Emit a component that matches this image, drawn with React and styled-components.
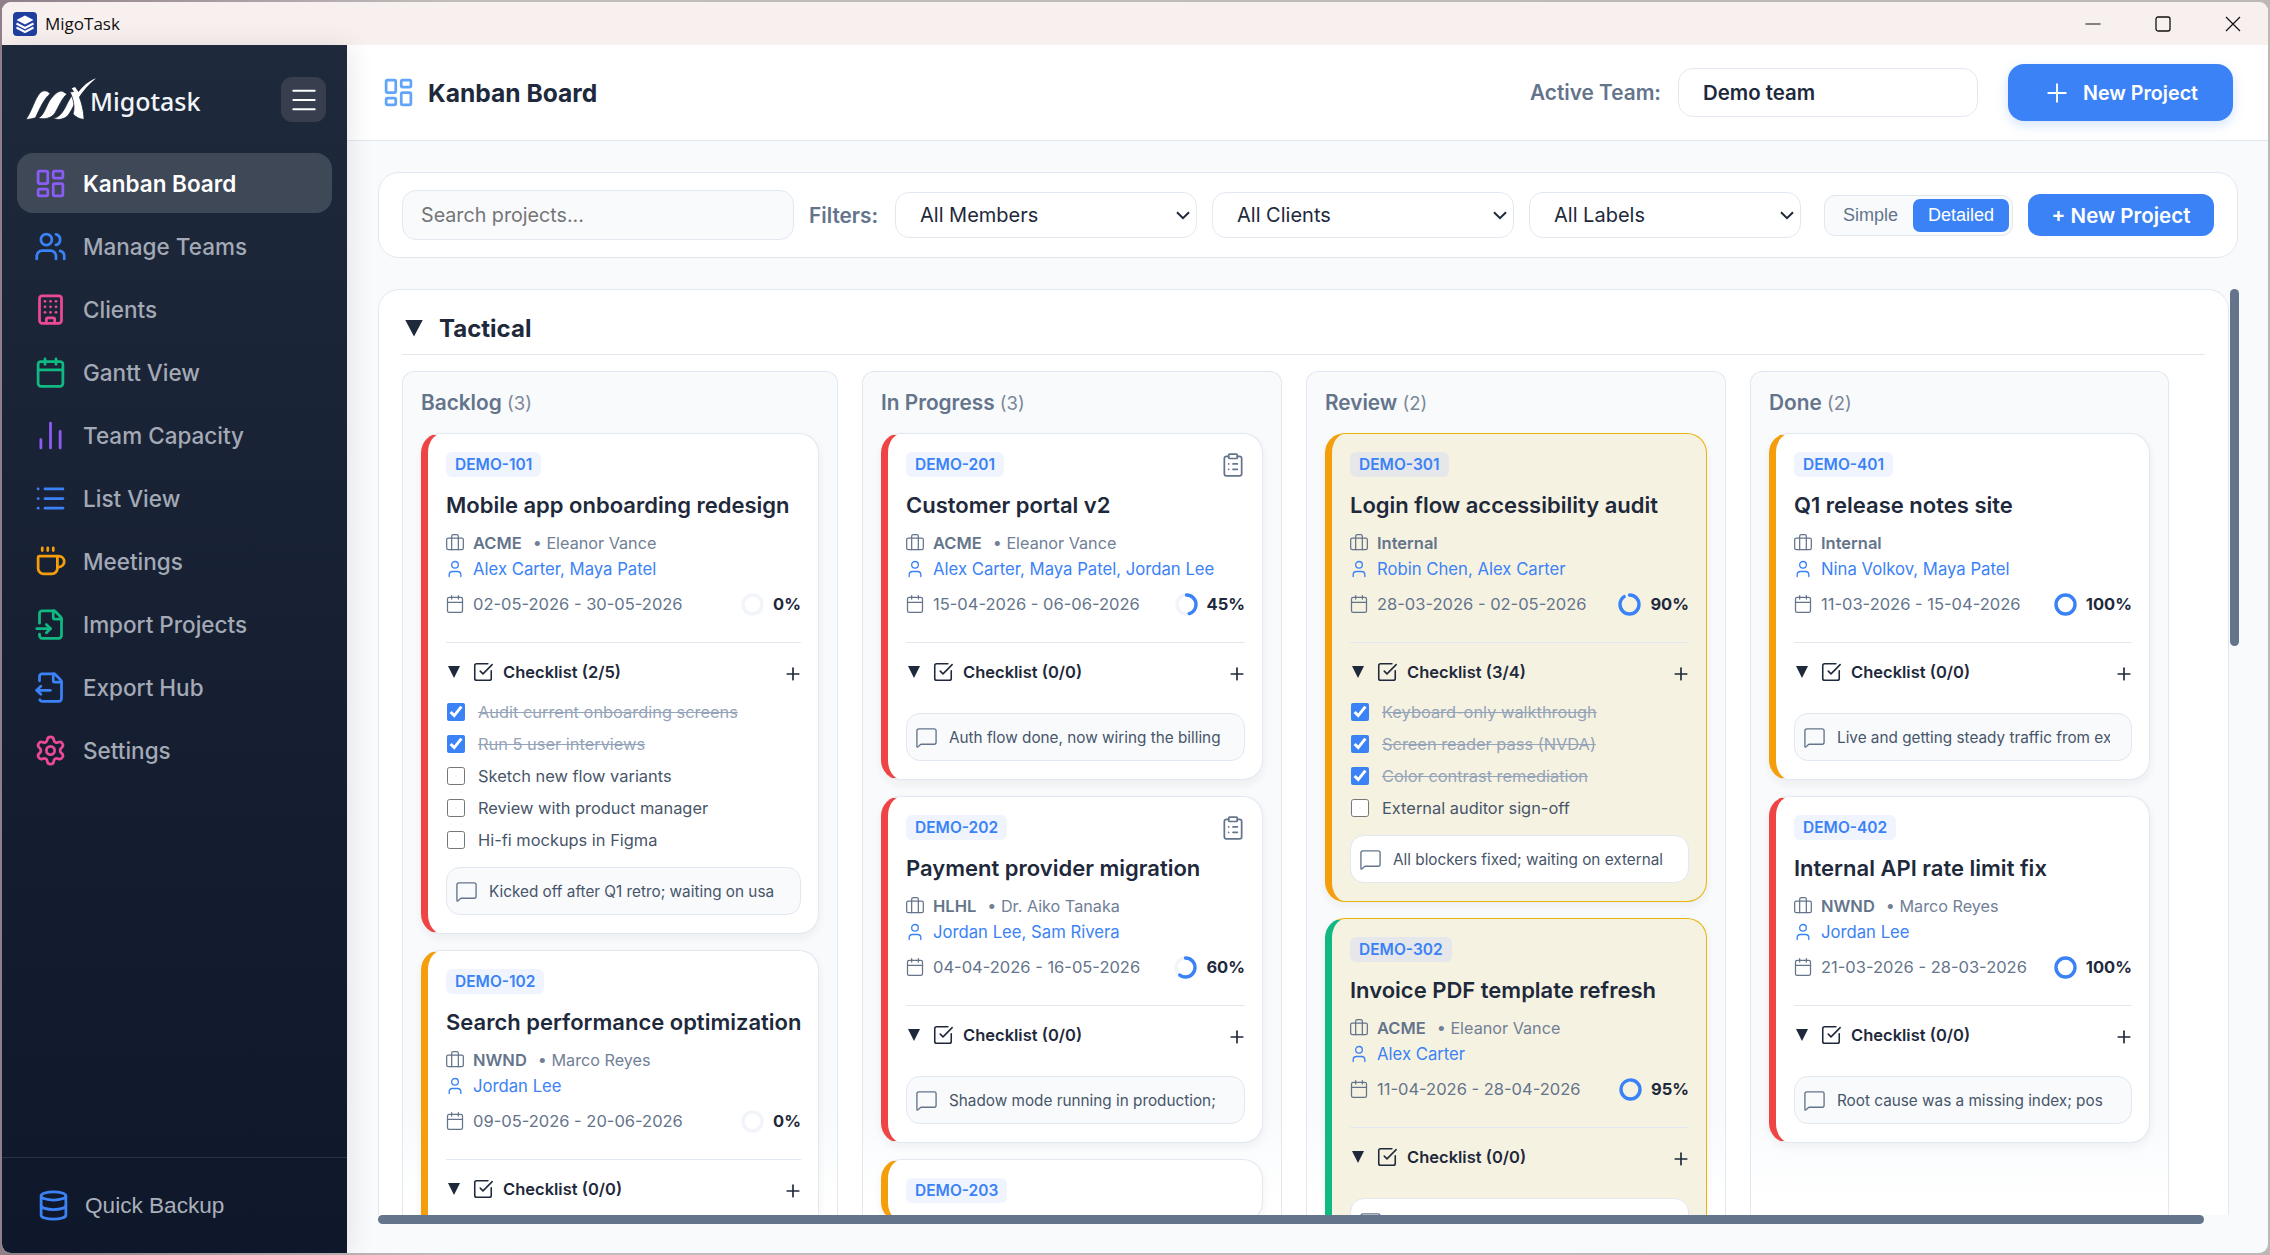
import React from 'react';
import styled, { createGlobalStyle } from 'styled-components';
import {
  LayoutDashboard, Users, Building, Calendar, ChartNoAxesColumn, List, Coffee, FileInput,
  FileOutput, Settings, Database, Menu, Plus, Briefcase, User, SquareCheckBig, MessageSquare, ClipboardList,
} from 'lucide-react';

const GlobalStyle = createGlobalStyle`
  * { box-sizing: border-box; }
  html, body { margin: 0; height: 100%; }
  body {
    background: linear-gradient(90deg, #8f7f88, #c2bdbd 20%, #bdb8b8);
    font-family: Inter, "Liberation Sans", sans-serif;
    overflow: hidden;
  }
`;

const chevron = `url("data:image/svg+xml,%3Csvg xmlns='http://www.w3.org/2000/svg' width='14' height='9' viewBox='0 0 14 9'%3E%3Cpath d='M1 1.2l6 6 6-6' fill='none' stroke='%231e293b' stroke-width='2'/%3E%3C/svg%3E")`;

//STYLED COMPONENTS
const Win = styled.div`
  width: 2266px;
  height: 1251px;
  margin: 2px;
  border-radius: 9px;
  overflow: hidden;
  display: flex;
  flex-direction: column;
  background: #f8fafc;
`;

const TitleBar = styled.div`
  height: 43px;
  flex: none;
  background: #f8f0ee;
  display: flex;
  align-items: center;
  padding-left: 11px;
`;

const WinName = styled.span`
  font-family: "Open Sans", sans-serif;
  font-size: 17px;
  color: #111;
  margin-left: 8px;
  flex: 1;
`;

const WinBtn = styled.div`
  width: 70px;
  height: 43px;
  display: flex;
  align-items: center;
  justify-content: center;
`;

const Body = styled.div`
  flex: 1;
  min-height: 0;
  display: flex;
`;

const Sidebar = styled.aside`
  width: 345px;
  flex: none;
  background: linear-gradient(180deg, #1e293b, #0f172a);
  box-shadow: 4px 0 24px rgba(0, 0, 0, 0.09);
  display: flex;
  flex-direction: column;
  position: relative;
  z-index: 2;
`;

const SideTop = styled.div`
  display: flex;
  align-items: center;
  justify-content: space-between;
  padding: 32px 21px 0 24px;
`;

const Logo = styled.div`
  display: flex;
  align-items: center;
`;

const LogoText = styled.span`
  font-family: "Noto Sans", sans-serif;
  font-size: 25px;
  font-weight: 500;
  color: #f1f5f9;
  margin-left: -8px;
  margin-top: 2px;
`;

const Burger = styled.div`
  width: 45px;
  height: 45px;
  border-radius: 11px;
  background: #373f4e;
  color: #fff;
  display: flex;
  align-items: center;
  justify-content: center;
`;

const Nav = styled.nav`
  flex: 1;
  padding: 31px 15px 0;
  display: flex;
  flex-direction: column;
  gap: 3px;
`;

const NavItem = styled.div`
  height: 60px;
  border-radius: 16px;
  display: flex;
  align-items: center;
  gap: 16px;
  padding-left: 17px;
  font-size: 22.5px;
  font-weight: ${p => (p.$active ? 600 : 500)};
  color: ${p => (p.$active ? '#fff' : '#a3a9b5')};
  background: ${p => (p.$active ? '#3f4857' : 'transparent')};
  svg { color: ${p => p.$color}; flex: none; }
`;

const SideFoot = styled.div`
  height: 96px;
  flex: none;
  border-top: 1px solid #2a3345;
  display: flex;
  align-items: center;
  gap: 15px;
  padding-left: 35px;
  font-family: "Liberation Sans", sans-serif;
  font-size: 22.6px;
  color: #aab0ba;
  svg { color: #3b82f6; flex: none; }
`;

const Main = styled.main`
  flex: 1;
  min-width: 0;
  display: flex;
  flex-direction: column;
`;

const Header = styled.header`
  height: 96px;
  flex: none;
  background: #fff;
  border-bottom: 1px solid #e2e8f0;
  display: flex;
  align-items: center;
  padding: 0 35px;
`;

const PageTitle = styled.h1`
  margin: 0 0 0 13px;
  flex: 1;
  font-size: 24.6px;
  font-weight: 700;
  color: #1e293b;
`;

const TeamLabel = styled.span`
  font-size: 20.8px;
  font-weight: 600;
  color: #64748b;
  margin-right: 17px;
`;

const TeamSelect = styled.select`
  appearance: none;
  width: 300px;
  height: 49px;
  border: 1px solid #e2e8f0;
  border-radius: 15px;
  background: #fff;
  padding-left: 24px;
  margin-right: 30px;
  font-family: inherit;
  font-size: 20.4px;
  font-weight: 600;
  color: #1e293b;
`;

const BigButton = styled.button`
  width: 225px;
  height: 57px;
  border: 0;
  border-radius: 16px;
  background: #3b82f6;
  color: #fff;
  display: flex;
  align-items: center;
  gap: 11px;
  padding-left: 34px;
  font-family: inherit;
  font-size: 19.7px;
  font-weight: 600;
  box-shadow: 0 4px 12px rgba(59, 130, 246, 0.22);
`;

const Content = styled.div`
  flex: 1;
  min-height: 0;
  display: flex;
  flex-direction: column;
  padding: 31px 30px 29px 31px;
`;

const Toolbar = styled.div`
  height: 86px;
  flex: none;
  background: #fff;
  border: 1px solid #e2e8f0;
  border-radius: 21px;
  display: flex;
  align-items: center;
  gap: 15px;
  padding: 0 23px;
`;

const Search = styled.input`
  width: 392px;
  height: 50px;
  background: #f8fafc;
  border: 1px solid #e2e8f0;
  border-radius: 14px;
  padding-left: 18px;
  font-family: inherit;
  font-size: 19.7px;
  &::placeholder { color: #757575; }
`;

const FilterLabel = styled.span`
  width: 71px;
  font-size: 20.8px;
  font-weight: 600;
  color: #64748b;
  white-space: nowrap;
`;

const FilterSelect = styled.select`
  appearance: none;
  width: ${p => p.$w}px;
  height: 46px;
  border: 1px solid #e2e8f0;
  border-radius: 14px;
  background: #fff ${chevron} no-repeat right 6px center;
  padding-left: 24px;
  font-family: inherit;
  font-size: 20px;
  color: #1e293b;
`;

const Toggle = styled.div`
  width: 189px;
  height: 41px;
  margin-left: 8px;
  background: #f8fafc;
  border: 1px solid #e2e8f0;
  border-radius: 11px;
  padding: 3px;
  display: flex;
`;

const ToggleBtn = styled.button`
  width: ${p => (p.$active ? 96 : 85)}px;
  border: 0;
  border-radius: 7px;
  background: ${p => (p.$active ? '#3b82f6' : 'transparent')};
  color: ${p => (p.$active ? '#fff' : '#64748b')};
  font-family: "Liberation Sans", sans-serif;
  font-size: 18px;
  padding: 0;
`;

const SmallButton = styled.button`
  width: 186px;
  height: 42px;
  border: 0;
  border-radius: 12px;
  background: #3b82f6;
  color: #fff;
  font-family: inherit;
  font-size: 20.5px;
  font-weight: 600;
  padding: 0;
`;

const BoardRow = styled.div`
  flex: 1;
  min-height: 0;
  margin-top: 31px;
  margin-right: -1px;
  display: flex;
`;

const Section = styled.section`
  flex: 1;
  min-width: 0;
  background: #fff;
  border: 1px solid #e2e8f0;
  border-bottom: 0;
  border-radius: 21px 21px 0 0;
  padding: 0 23px;
  overflow: hidden;
`;

const SectionHead = styled.div`
  height: 65px;
  border-bottom: 1px solid #e2e8f0;
  display: flex;
  align-items: center;
  gap: 16px;
  padding: 12px 3px 0;
  font-size: 24px;
  font-weight: 700;
  color: #1e293b;
`;

const Caret = styled.span`
  display: block;
  width: ${p => p.$size}px;
  height: ${p => p.$h}px;
  flex: none;
  background: #1e293b;
  clip-path: polygon(0 0, 100% 0, 50% 100%);
`;

const Columns = styled.div`
  display: flex;
  gap: 24px;
  margin-top: 16px;
  align-items: stretch;
`;

const Column = styled.div`
  width: ${p => p.$w}px;
  flex: none;
  border: 1px solid #e2e8f0;
  border-bottom: 0;
  border-radius: 12px 12px 0 0;
  background: linear-gradient(#f8fafc 740px, #fff 830px);
  padding: 0 18px;
  min-height: 900px;
`;

const ColHead = styled.div`
  height: 61px;
  padding-top: 18px;
  line-height: 26px;
  font-size: 20.8px;
  font-weight: 600;
  color: #64748b;
`;

const ColCount = styled.span`
  font-size: 18.5px;
  font-weight: 400;
  color: #7b8798;
`;

const CardStack = styled.div`
  display: flex;
  flex-direction: column;
  gap: 16px;
`;

const Card = styled.article`
  background: ${p => (p.$warn ? '#f6f2e2' : '#fff')};
  border: 1px solid ${p => (p.$warn ? '#eab308' : '#e2e8f0')};
  border-left: 7px solid ${p => p.$stripe};
  border-radius: 20px;
  padding: 18px 17px 18px 18px;
  box-shadow: 0 4px 10px rgba(30, 41, 59, 0.06);
`;

const CardTop = styled.div`
  height: 25px;
  display: flex;
  align-items: center;
  justify-content: space-between;
  svg { color: #64748b; margin-right: -1px; }
`;

const Badge = styled.span`
  height: 25px;
  line-height: 25px;
  padding: 0 9px;
  border-radius: 6px;
  background: ${p => (p.$warn ? '#e5e7eb' : '#eff4fe')};
  color: #3b82f6;
  font-size: 15.5px;
  font-weight: 600;
`;

const CardTitle = styled.h3`
  margin: 12px 0 9px;
  height: 32px;
  line-height: 32px;
  font-size: 22px;
  font-weight: 600;
  color: #1e293b;
  white-space: nowrap;
`;

const MetaRow = styled.div`
  height: 26px;
  display: flex;
  align-items: center;
  gap: 8px;
  font-size: ${p => p.$size || 16.5}px;
  color: ${p => p.$color || '#64748b'};
  svg { margin-left: -1px; flex: none; }
`;

const ClientCode = styled.span`
  font-weight: 600;
`;

const Owner = styled.span`
  margin-left: 3px;
  font-size: 16.2px;
  color: #718096;
`;

const DateRow = styled(MetaRow)`
  margin-top: 9px;
`;

const DateText = styled.span`
  flex: 1;
`;

const Percent = styled.span`
  margin-left: 1px;
  font-weight: 700;
  color: #1e293b;
`;

const Rule = styled.div`
  height: 1px;
  margin-top: 25px;
  background: #e2e8f0;
`;

const CheckHead = styled.div`
  height: 26px;
  margin-top: 16px;
  display: flex;
  align-items: center;
  font-size: 16.5px;
  font-weight: 600;
  color: #1e293b;
`;

const CheckCaret = styled.div`
  width: 26px;
  padding-left: 2px;
`;

const CheckTitle = styled.span`
  flex: 1;
  margin-left: 9px;
`;

const AddItem = styled.div`
  margin: 4px -2px 0 0;
  display: flex;
`;

const Items = styled.div`
  margin-top: 11px;
  min-height: 6px;
`;

const Item = styled.label`
  height: 32px;
  display: flex;
  align-items: center;
  gap: 13px;
  font-size: 16.4px;
  color: ${p => (p.$done ? '#94a3b8' : '#475569')};
  text-decoration: ${p => (p.$done ? 'line-through' : 'none')};
`;

const Check = styled.input`
  width: 18px;
  height: 18px;
  margin: 0 0 0 1px;
  accent-color: #3b82f6;
`;

const Note = styled.div`
  height: 48px;
  margin-top: 11px;
  border: 1px solid #e2e8f0;
  border-radius: 14px;
  background: ${p => (p.$warn ? '#fff' : '#f8fafc')};
  display: flex;
  align-items: center;
  gap: 11px;
  padding: 0 21px 0 8px;
  font-size: 15.3px;
  color: #475569;
  svg { flex: none; color: #64748b; }
`;

const NoteText = styled.span`
  overflow: hidden;
  white-space: nowrap;
`;

const VTrack = styled.div`
  width: 10px;
  flex: none;
  padding-left: 1px;
`;

const VThumb = styled.div`
  height: 357px;
  border-radius: 5px;
  background: #64748b;
`;

const HThumb = styled.div`
  width: 1826px;
  height: 9px;
  flex: none;
  border-radius: 5px;
  background: #64748b;
`;
//END of styled components

const navItems = [
  ['Kanban Board', LayoutDashboard, '#8b5cf6'],
  ['Manage Teams', Users, '#3b82f6'],
  ['Clients', Building, '#ec4899'],
  ['Gantt View', Calendar, '#10b981'],
  ['Team Capacity', ChartNoAxesColumn, '#8b5cf6'],
  ['List View', List, '#3b82f6'],
  ['Meetings', Coffee, '#f59e0b'],
  ['Import Projects', FileInput, '#10b981'],
  ['Export Hub', FileOutput, '#3b82f6'],
  ['Settings', Settings, '#ec4899'],
];

const RED = '#ef4444';
const AMBER = '#f59e0b';
const GREEN = '#10b981';

const board = [
  {
    name: 'Backlog', count: 3, width: 436,
    cards: [
      {
        id: 'DEMO-101', stripe: RED, title: 'Mobile app onboarding redesign', client: 'ACME', owner: 'Eleanor Vance',
        people: 'Alex Carter, Maya Patel', dates: '02-05-2026 - 30-05-2026', pct: 0,
        done: 2,
        items: ['Audit current onboarding screens', 'Run 5 user interviews', 'Sketch new flow variants', 'Review with product manager', 'Hi-fi mockups in Figma'],
        note: 'Kicked off after Q1 retro; waiting on usa',
      },
      {
        id: 'DEMO-102', stripe: AMBER, title: 'Search performance optimization', client: 'NWND', owner: 'Marco Reyes',
        people: 'Jordan Lee', dates: '09-05-2026 - 20-06-2026', pct: 0, note: '',
      },
    ],
  },
  {
    name: 'In Progress', count: 3, width: 420,
    cards: [
      {
        id: 'DEMO-201', stripe: RED, clip: true, title: 'Customer portal v2', client: 'ACME', owner: 'Eleanor Vance',
        people: 'Alex Carter, Maya Patel, Jordan Lee', dates: '15-04-2026 - 06-06-2026', pct: 45,
        note: 'Auth flow done, now wiring the billing',
      },
      {
        id: 'DEMO-202', stripe: RED, clip: true, title: 'Payment provider migration', client: 'HLHL', owner: 'Dr. Aiko Tanaka',
        people: 'Jordan Lee, Sam Rivera', dates: '04-04-2026 - 16-05-2026', pct: 60,
        note: 'Shadow mode running in production;',
      },
      { id: 'DEMO-203', stripe: AMBER, short: true },
    ],
  },
  {
    name: 'Review', count: 2, width: 420,
    cards: [
      {
        id: 'DEMO-301', stripe: AMBER, warn: true, title: 'Login flow accessibility audit', client: 'Internal',
        people: 'Robin Chen, Alex Carter', dates: '28-03-2026 - 02-05-2026', pct: 90,
        done: 3,
        items: ['Keyboard-only walkthrough', 'Screen reader pass (NVDA)', 'Color contrast remediation', 'External auditor sign-off'],
        note: 'All blockers fixed; waiting on external',
      },
      {
        id: 'DEMO-302', stripe: GREEN, warn: true, title: 'Invoice PDF template refresh', client: 'ACME', owner: 'Eleanor Vance',
        people: 'Alex Carter', dates: '11-04-2026 - 28-04-2026', pct: 95, note: '',
      },
    ],
  },
  {
    name: 'Done', count: 2, width: 419,
    cards: [
      {
        id: 'DEMO-401', stripe: AMBER, title: 'Q1 release notes site', client: 'Internal',
        people: 'Nina Volkov, Maya Patel', dates: '11-03-2026 - 15-04-2026', pct: 100,
        note: 'Live and getting steady traffic from ex',
      },
      {
        id: 'DEMO-402', stripe: RED, title: 'Internal API rate limit fix', client: 'NWND', owner: 'Marco Reyes',
        people: 'Jordan Lee', dates: '21-03-2026 - 28-03-2026', pct: 100,
        note: 'Root cause was a missing index; pos',
      },
    ],
  },
];

const AppIcon = () => (
  <svg width="24" height="24" viewBox="0 0 24 24">
    <rect width="24" height="24" rx="4" fill="#1e3f9e" />
    <path d="M12 3.5 20.5 8 12 12.5 3.5 8Z" fill="#fff" />
    <path d="M3.5 11.5 12 16l8.5-4.5M3.5 15.5 12 20l8.5-4.5" fill="none" stroke="#fff" strokeWidth="2" />
  </svg>
);

const LogoMark = () => (
  <svg width="72" height="44" viewBox="0 0 72 44">
    <g fill="#fff" stroke="#1e293b" strokeWidth="0.8">
      <path d="M0 41.3C6 33 9 20 14 15 17 12 21 12 24 15.7 18 21 14 30 9.500 39.700 6 41 3 41.300 0 41.300Z" />
      <path d="M12 40C18 38 20 28 24 22 27 18 31 13 36 13L41 16C36 20 33 28 29 35 26 40 18 42 12 40Z" />
      <path d="M27 40C33 40 37 34 40 28 43 22 46 16 51 13L54 16C50 22 47 30 43 36 40 41 32 43 27 40Z" />
      <path d="M44 14 51 13C55 22 58 33 58 41.500 53 41 50 39 47 36 49 30 48 22 44 14Z" />
    </g>
    <path d="M45.700 10.300 49 9 52.500 14C57 8 63 3 70 .3 63 6 57 13 52.300 20Z" fill="#fff" />
  </svg>
);

const Ring = ({ pct }) => {
  const r = 9.5;
  const c = 2 * Math.PI * r;
  return (
    <svg width="23" height="23" viewBox="0 0 23 23">
      <circle cx="11.5" cy="11.5" r={r} fill="none" stroke="#f1f5f9" strokeWidth="3.4" />
      {pct > 0 && (
        <circle
          cx="11.5" cy="11.5" r={r} fill="none" stroke="#3b82f6" strokeWidth="3.4" strokeLinecap="round"
          strokeDasharray={`${(c * pct) / 100} ${c}`} transform="rotate(-90 11.5 11.5)"
        />
      )}
    </svg>
  );
};

const ProjectCard = ({ card }) => {
  const items = card.items || [];
  const done = card.done || 0;
  if (card.short) {
    return (
      <Card $stripe={card.stripe}>
        <CardTop><Badge>{card.id}</Badge></CardTop>
      </Card>
    );
  }
  return (
    <Card $stripe={card.stripe} $warn={card.warn}>
      <CardTop>
        <Badge $warn={card.warn}>{card.id}</Badge>
        {card.clip && <ClipboardList size={26} strokeWidth={1.6} />}
      </CardTop>
      <CardTitle>{card.title}</CardTitle>
      <MetaRow>
        <Briefcase size={20} strokeWidth={1.5} />
        <ClientCode>{card.client}</ClientCode>
        {card.owner && <Owner>• {card.owner}</Owner>}
      </MetaRow>
      <MetaRow $color="#3b82f6" $size={16.7}>
        <User size={20} strokeWidth={1.6} />
        {card.people}
      </MetaRow>
      <DateRow>
        <Calendar size={20} strokeWidth={1.5} />
        <DateText>{card.dates}</DateText>
        <Ring pct={card.pct} />
        <Percent>{card.pct}%</Percent>
      </DateRow>
      <Rule />
      <CheckHead>
        <CheckCaret><Caret $size={12} $h={12} /></CheckCaret>
        <SquareCheckBig size={22} strokeWidth={1.7} />
        <CheckTitle>Checklist ({done}/{items.length})</CheckTitle>
        <AddItem><Plus size={20} strokeWidth={2} /></AddItem>
      </CheckHead>
      <Items>
        {items.map((text, i) => (
          <Item key={text} $done={i < done}>
            <Check type="checkbox" defaultChecked={i < done} />
            {text}
          </Item>
        ))}
      </Items>
      <Note $warn={card.warn}>
        <MessageSquare size={23} strokeWidth={1.4} />
        <NoteText>{card.note}</NoteText>
      </Note>
    </Card>
  );
};

const App = () => {
  return (
    <>
      <GlobalStyle />
      <Win>
        <TitleBar>
          <AppIcon />
          <WinName>MigoTask</WinName>
          <WinBtn>
            <svg width="16" height="16" viewBox="0 0 16 16"><path d="M0.5 8h15" stroke="#111" strokeWidth="1.2" /></svg>
          </WinBtn>
          <WinBtn>
            <svg width="16" height="16" viewBox="0 0 16 16"><rect x="1" y="1" width="14" height="14" rx="2" fill="none" stroke="#111" strokeWidth="1.3" /></svg>
          </WinBtn>
          <WinBtn>
            <svg width="16" height="16" viewBox="0 0 16 16"><path d="M1 1l14 14M15 1 1 15" stroke="#111" strokeWidth="1.2" /></svg>
          </WinBtn>
        </TitleBar>
        <Body>
          <Sidebar>
            <SideTop>
              <Logo>
                <LogoMark />
                <LogoText>Migotask</LogoText>
              </Logo>
              <Burger><Menu size={32} strokeWidth={1.5} /></Burger>
            </SideTop>
            <Nav>
              {navItems.map(([label, Icon, color]) => (
                <NavItem key={label} $active={label === 'Kanban Board'} $color={color}>
                  <Icon size={33} />
                  {label}
                </NavItem>
              ))}
            </Nav>
            <SideFoot>
              <Database size={33} />
              Quick Backup
            </SideFoot>
          </Sidebar>
          <Main>
            <Header>
              <LayoutDashboard size={33} color="#60a5fa" />
              <PageTitle>Kanban Board</PageTitle>
              <TeamLabel>Active Team:</TeamLabel>
              <TeamSelect defaultValue="demo">
                <option value="demo">Demo team</option>
              </TeamSelect>
              <BigButton><Plus size={30} strokeWidth={1.5} />New Project</BigButton>
            </Header>
            <Content>
              <Toolbar>
                <Search placeholder="Search projects..." />
                <FilterLabel>Filters:</FilterLabel>
                <FilterSelect $w={302}><option>All Members</option></FilterSelect>
                <FilterSelect $w={302}><option>All Clients</option></FilterSelect>
                <FilterSelect $w={272}><option>All Labels</option></FilterSelect>
                <Toggle>
                  <ToggleBtn>Simple</ToggleBtn>
                  <ToggleBtn $active>Detailed</ToggleBtn>
                </Toggle>
                <SmallButton>+ New Project</SmallButton>
              </Toolbar>
              <BoardRow>
                <Section>
                  <SectionHead>
                    <Caret $size={18} $h={17} />
                    Tactical
                  </SectionHead>
                  <Columns>
                    {board.map(col => (
                      <Column key={col.name} $w={col.width}>
                        <ColHead>{col.name} <ColCount>({col.count})</ColCount></ColHead>
                        <CardStack>
                          {col.cards.map(card => <ProjectCard key={card.id} card={card} />)}
                        </CardStack>
                      </Column>
                    ))}
                  </Columns>
                </Section>
                <VTrack><VThumb /></VTrack>
              </BoardRow>
              <HThumb />
            </Content>
          </Main>
        </Body>
      </Win>
    </>
  );
};

export default App;
